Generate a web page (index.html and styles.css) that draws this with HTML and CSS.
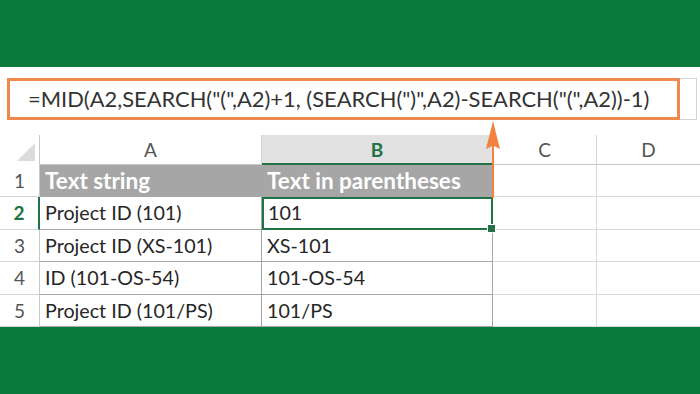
FILE: index.html
```html
<html>
	<head>
		<meta charset="utf-8">
		<title>MID SEARCH</title>
		<link rel="stylesheet" href="styles.css">
	</head>
	<body>
		<div class="band"></div>
		<div class="sheet">
			<div class="fbar">
				<div class="formula">=MID(A2,SEARCH("(",A2)+1, (SEARCH(")",A2)-SEARCH("(",A2))-1)</div>
				<div class="fill"></div>
			</div>
			<div class="grid">
				<div class="corner"><span class="tri"></span></div>
				<div class="ch">A</div>
				<div class="ch sel">B</div>
				<div class="ch">C</div>
				<div class="ch last">D</div>

				<div class="rh">1</div>
				<div class="c head">Text string</div>
				<div class="c head">Text in parentheses</div>
				<div class="c g"></div>
				<div class="c g last"></div>

				<div class="rh on">2</div>
				<div class="c">Project ID (101)</div>
				<div class="c active">101</div>
				<div class="c g"></div>
				<div class="c g last"></div>

				<div class="rh">3</div>
				<div class="c">Project ID (XS-101)</div>
				<div class="c">XS-101</div>
				<div class="c g"></div>
				<div class="c g last"></div>

				<div class="rh">4</div>
				<div class="c">ID (101-OS-54)</div>
				<div class="c">101-OS-54</div>
				<div class="c g"></div>
				<div class="c g last"></div>

				<div class="rh">5</div>
				<div class="c">Project ID (101/PS)</div>
				<div class="c">101/PS</div>
				<div class="c g"></div>
				<div class="c g last"></div>
			</div>
			<svg class="arrow" width="20" height="78" viewBox="0 0 20 78">
				<path d="M10 1 L17 29 L11 26 L11 78 L9 78 L9 26 L3 29 Z" fill="#f5813f"/>
			</svg>
		</div>
		<div class="band"></div>
	</body>
</html>
```

FILE: styles.css
```css
*{
	margin: 0px;
	padding: 0px;
	box-sizing: border-box;
}
body{
	width: 700px;
	height: 394px;
	overflow: hidden;
	font-family: Lato, "Liberation Sans", sans-serif;
	background: #fff;
}
.band{
	height: 67px;
	background: #0a793c;
}
.sheet{
	position: relative;
	height: 260px;
	background: #fff;
}
.fbar{
	display: flex;
	padding: 11px 0 0 7px;
	height: 68px;
}
.formula{
	width: 673px;
	height: 42px;
	border: 3px solid #f08a4c;
	padding-left: 18px;
	font-size: 21.9px;
	line-height: 35px;
	color: #333;
	white-space: nowrap;
}
.fill{
	flex: 1;
	height: 42px;
	border-top: 1px solid #d4d4d4;
	border-bottom: 1px solid #d4d4d4;
	border-right: 1px solid #d4d4d4;
	margin-right: 3px;
}
.grid{
	display: grid;
	grid-template-columns: 40px 222px 231px 104px 103px;
	grid-template-rows: 30px repeat(5, 32.4px);
	font-size: 19.7px;
}
.corner{
	border-right: 1px solid #c8c8c8;
	position: relative;
}
.tri{
	position: absolute;
	right: 4px;
	bottom: 4px;
	width: 0;
	height: 0;
	border-left: 18px solid transparent;
	border-bottom: 18px solid #dcdcdc;
}
.ch{
	text-align: center;
	color: #555;
	font-size: 19px;
	line-height: 29px;
	border-right: 1px solid #d4d4d4;
	border-bottom: 1px solid #c8c8c8;
}
.ch.sel{
	background: #e1e1e1;
	color: #217346;
	font-weight: bold;
	border-bottom: 2px solid #217346;
}
.rh{
	text-align: center;
	color: #555;
	font-size: 19px;
	line-height: 31px;
	border-right: 1px solid #c8c8c8;
	border-bottom: 1px solid #d4d4d4;
}
.rh.on{
	color: #217346;
	font-weight: bold;
	border-right: 2px solid #217346;
}
.c{
	padding-left: 5px;
	line-height: 31px;
	color: #262626;
	white-space: nowrap;
	border-right: 1px solid #a6a6a6;
	border-bottom: 1px solid #a6a6a6;
}
.c.head{
	background: #a6a6a6;
	color: #fff;
	font-size: 22.5px;
	font-weight: bold;
	border-right: none;
	border-bottom: none;
}
.c.g{
	border-right: 1px solid #d9d9d9;
	border-bottom: 1px solid #d9d9d9;
}
.last{
	border-right: none !important;
}
.c.active{
	position: relative;
	border: 2px solid #217346;
	line-height: 28px;
	padding-left: 4px;
}
.c.active::after{
	content: "";
	position: absolute;
	right: -5px;
	bottom: -5px;
	width: 7px;
	height: 7px;
	background: #217346;
	border: 1px solid #fff;
}
.arrow{
	position: absolute;
	left: 483px;
	top: 53px;
}
```
